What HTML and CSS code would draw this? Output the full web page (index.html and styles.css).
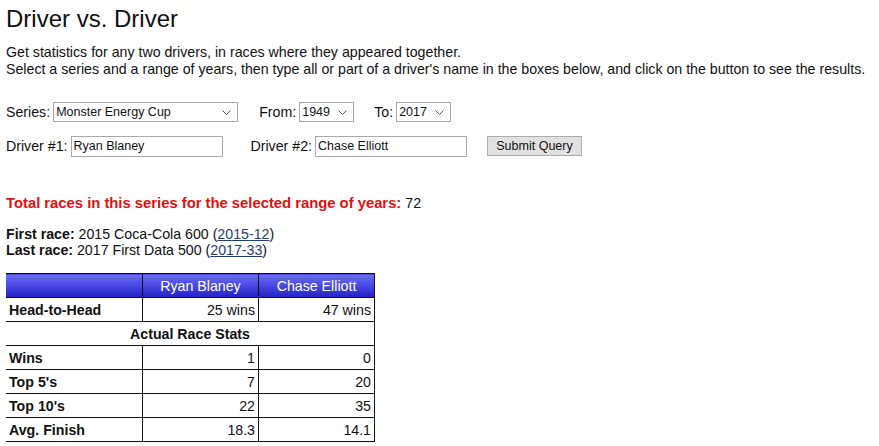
FILE: index.html
```html
<!DOCTYPE html>
<html>
<head>
<meta charset="utf-8">
<link rel="stylesheet" href="styles.css">
</head>
<body>
<h1 class="title">Driver vs. Driver</h1>
<p class="intro">Get statistics for any two drivers, in races where they appeared together.<br>Select a series and a range of years, then type all or part of a driver's name in the boxes below, and click on the button to see the results.</p>
<form class="form">
  <div class="row">
    <label class="lbl">Series:</label>
    <select class="sel sel-series"><option>Monster Energy Cup</option></select>
    <label class="lbl gap-from">From:</label>
    <select class="sel sel-year"><option>1949</option></select>
    <label class="lbl gap-to">To:</label>
    <select class="sel sel-year"><option>2017</option></select>
  </div>
  <div class="row row2">
    <label class="lbl">Driver #1:</label>
    <input class="txt" type="text" value="Ryan Blaney">
    <label class="lbl gap-d2">Driver #2:</label>
    <input class="txt" type="text" value="Chase Elliott">
    <button class="btn" type="button">Submit Query</button>
  </div>
</form>
<p class="total"><b>Total races in this series for the selected range of years:</b> 72</p>
<p class="races"><b>First race:</b> 2015 Coca-Cola 600 (<a href="#">2015-12</a>)<br><b>Last race:</b> 2017 First Data 500 (<a href="#">2017-33</a>)</p>
<table class="stats">
  <tr class="head"><th></th><th>Ryan Blaney</th><th>Chase Elliott</th></tr>
  <tr><td class="name">Head-to-Head</td><td>25 wins</td><td>47 wins</td></tr>
  <tr><td class="section" colspan="3">Actual Race Stats</td></tr>
  <tr><td class="name">Wins</td><td>1</td><td>0</td></tr>
  <tr><td class="name">Top 5's</td><td>7</td><td>20</td></tr>
  <tr><td class="name">Top 10's</td><td>22</td><td>35</td></tr>
  <tr><td class="name">Avg. Finish</td><td>18.3</td><td>14.1</td></tr>
</table>
</body>
</html>
```
FILE: styles.css
```css
body {
  margin: 5px 6px;
  font-family: "Liberation Sans", Arial, sans-serif;
  font-size: 14.2px;
  color: #111;
  background: #fff;
}
.title {
  font-size: 24px;
  font-weight: normal;
  margin: 0 0 11px 0;
  line-height: 28px;
}
.intro {
  margin: 0 0 23px 0;
  line-height: 17px;
}
.form { margin: 0; }
.row {
  display: flex;
  align-items: center;
  height: 22px;
}
.row2 { margin-top: 12px; }
.lbl { margin-right: 3px; }
.gap-from { margin-left: 21px; }
.gap-to { margin-left: 20px; }
.gap-d2 { margin-left: 28px; }
.sel {
  font-family: "Liberation Sans", Arial, sans-serif;
  font-size: 12.5px;
  height: 20px;
  border: 1px solid #a9a9a9;
  background: #fff;
  color: #111;
  padding: 0 2px;
  border-radius: 0;
  appearance: none;
  -webkit-appearance: none;
  background-image: url("data:image/svg+xml,%3Csvg xmlns='http://www.w3.org/2000/svg' width='9' height='5'%3E%3Cpath d='M0.5 0.5 L4.5 4.5 L8.5 0.5' fill='none' stroke='%23555' stroke-width='1'/%3E%3C/svg%3E");
  background-repeat: no-repeat;
  background-position: right 6px center;
}
.sel-series { width: 185px; }
.sel-year { width: 55px; }
.txt {
  font-family: "Liberation Sans", Arial, sans-serif;
  font-size: 12.5px;
  width: 152px;
  height: 21px;
  box-sizing: border-box;
  border: 1px solid #a9a9a9;
  padding: 1px 2px;
  color: #111;
}
.btn {
  margin-left: 20px;
  font-family: "Liberation Sans", Arial, sans-serif;
  font-size: 12.5px;
  width: 95px;
  height: 20px;
  border: 1px solid #adadad;
  background: #e1e1e1;
  color: #111;
  padding: 0;
}
.total {
  margin: 38px 0 0 0;
  line-height: 17px;
}
.total b { color: #dd1111; font-size: 14.8px; }
.races {
  margin: 14px 0 0 0;
  line-height: 16px;
}
.races a { color: #1f3f6f; }
.stats {
  margin: 15px 0 0 -1px;
  border-collapse: collapse;
  border: 1px solid #111;
}
.stats td, .stats th {
  border: 1px solid #111;
  height: 23px;
  padding: 0 3px;
  line-height: 16px;
}
.stats th {
  color: #fff;
  font-weight: normal;
  background: linear-gradient(to bottom, #6c6cff, #2222c4);
  text-align: center;
}
.stats th:nth-child(1) { width: 130px; }
.stats th:nth-child(2), .stats th:nth-child(3) { width: 109px; }
.stats td { text-align: right; }
.stats td.name { text-align: left; font-weight: bold; }
.stats td.section { text-align: center; font-weight: bold; }
```
